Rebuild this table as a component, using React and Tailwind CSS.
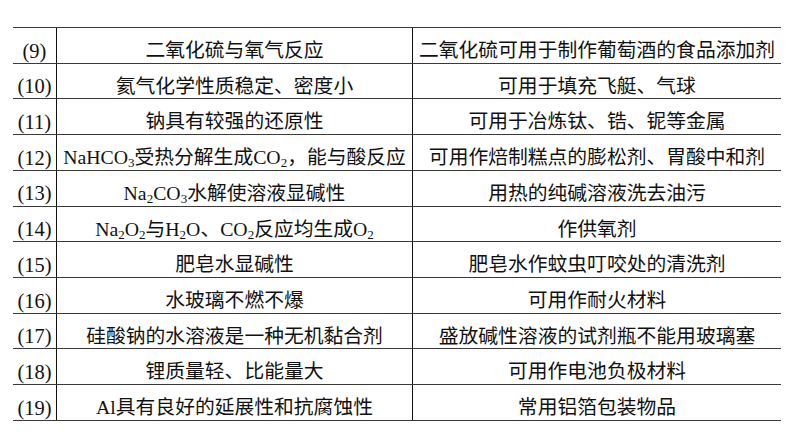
import React from 'react';

const S = ({ children }) => <sub className="text-[13px]">{children}</sub>;

const rows = [
  ['(9)', '二氧化硫与氧气反应', '二氧化硫可用于制作葡萄酒的食品添加剂'],
  ['(10)', '氦气化学性质稳定、密度小', '可用于填充飞艇、气球'],
  ['(11)', '钠具有较强的还原性', '可用于冶炼钛、锆、铌等金属'],
  [
    '(12)',
    <>NaHCO<S>3</S>受热分解生成CO<S>2</S>，能与酸反应</>,
    '可用作焙制糕点的膨松剂、胃酸中和剂',
  ],
  ['(13)', <>Na<S>2</S>CO<S>3</S>水解使溶液显碱性</>, '用热的纯碱溶液洗去油污'],
  [
    '(14)',
    <>Na<S>2</S>O<S>2</S>与H<S>2</S>O、CO<S>2</S>反应均生成O<S>2</S></>,
    '作供氧剂',
  ],
  ['(15)', '肥皂水显碱性', '肥皂水作蚊虫叮咬处的清洗剂'],
  ['(16)', '水玻璃不燃不爆', '可用作耐火材料'],
  ['(17)', '硅酸钠的水溶液是一种无机黏合剂', '盛放碱性溶液的试剂瓶不能用玻璃塞'],
  ['(18)', '锂质量轻、比能量大', '可用作电池负极材料'],
  ['(19)', 'Al具有良好的延展性和抗腐蚀性', '常用铝箔包装物品'],
];

const App = () => {
  return (
    <div
      className="w-[794px] h-[447px] bg-white pt-[27px] pl-[13px] text-[#111] text-[19.8px] leading-none"
      style={{ fontFamily: '"Liberation Serif", "Noto Sans CJK SC", serif' }}
    >
      <div className="w-[768px] border-t border-[#3a3a3a]">
        {rows.map((r, i) => (
          <div key={i} className="flex h-[35.73px] border-b border-[#3a3a3a]">
            <div className="w-[44px] border-r border-[#111] flex items-center justify-center pt-[11px] text-[20.5px] whitespace-nowrap">
              {r[0]}
            </div>
            <div className="w-[356px] border-r border-[#111] flex items-center justify-center pt-[11px] whitespace-nowrap">
              <span>{r[1]}</span>
            </div>
            <div className="flex-1 flex items-center justify-center pt-[11px] whitespace-nowrap">
              <span>{r[2]}</span>
            </div>
          </div>
        ))}
      </div>
    </div>
  );
};

export default App;
